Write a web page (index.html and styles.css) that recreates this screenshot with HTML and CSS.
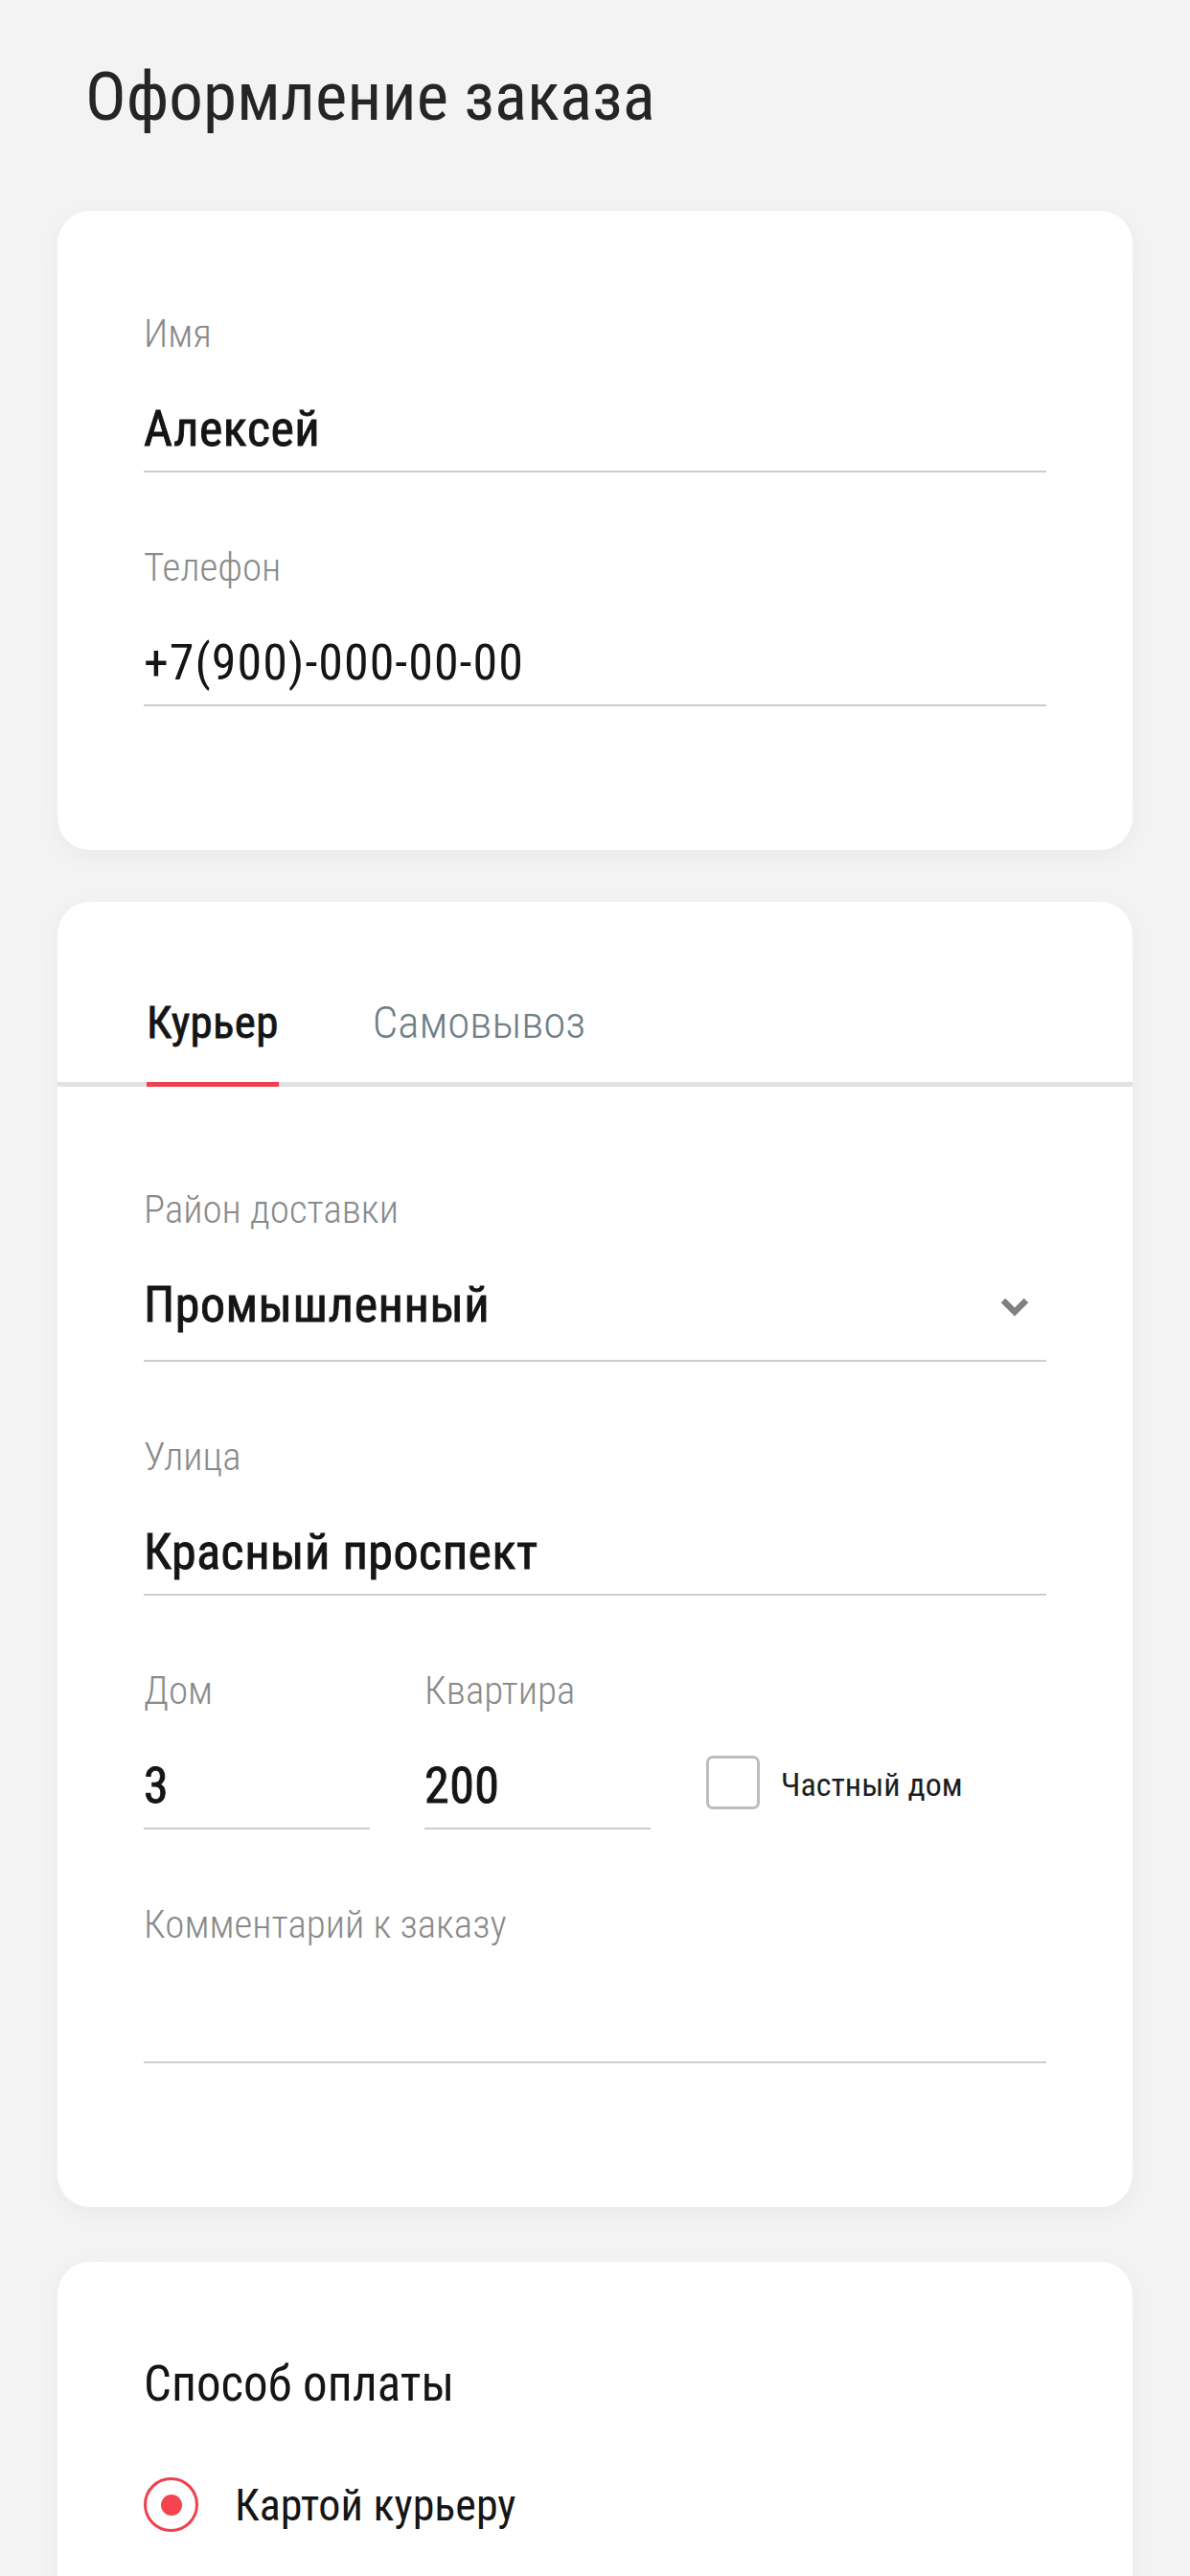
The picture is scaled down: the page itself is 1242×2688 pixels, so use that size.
FILE: index.html
```html
<!DOCTYPE html>
<html lang="ru">
<head>
<meta charset="utf-8">
<title>Оформление заказа</title>
<link rel="stylesheet" href="styles.css">
</head>
<body>
<main class="page">
  <h1 class="page-title">Оформление заказа</h1>

  <section class="card card-contacts">
    <div class="field">
      <div class="field-label">Имя</div>
      <div class="field-value">Алексей</div>
    </div>
    <div class="field">
      <div class="field-label">Телефон</div>
      <div class="field-value field-value-regular">+7(900)-000-00-00</div>
    </div>
  </section>

  <section class="card card-delivery">
    <nav class="tabs">
      <div class="tab tab-active">Курьер</div>
      <div class="tab">Самовывоз</div>
    </nav>
    <div class="card-body">
      <div class="field field-select">
        <div class="field-label">Район доставки</div>
        <div class="field-value select-row">
          <span>Промышленный</span>
          <svg class="chevron" width="32" height="22" viewBox="0 0 32 22" aria-hidden="true">
            <path d="M4 4 L16 16 L28 4" fill="none" stroke="#808080" stroke-width="6.5" stroke-linecap="butt" stroke-linejoin="miter"/>
          </svg>
        </div>
      </div>
      <div class="field">
        <div class="field-label">Улица</div>
        <div class="field-value">Красный проспект</div>
      </div>
      <div class="address-row">
        <div class="field field-short">
          <div class="field-label">Дом</div>
          <div class="field-value">3</div>
        </div>
        <div class="field field-short">
          <div class="field-label">Квартира</div>
          <div class="field-value">200</div>
        </div>
        <label class="checkbox-row">
          <span class="checkbox"></span>
          <span class="checkbox-text">Частный дом</span>
        </label>
      </div>
      <div class="field">
        <div class="field-label">Комментарий к заказу</div>
        <div class="field-value">&nbsp;</div>
      </div>
    </div>
  </section>

  <section class="card card-payment">
    <h2 class="section-title">Способ оплаты</h2>
    <div class="radio-row">
      <span class="radio"><span class="radio-dot"></span></span>
      <span class="radio-text">Картой курьеру</span>
    </div>
  </section>
</main>
</body>
</html>
```

FILE: styles.css
```css
* {
  box-sizing: border-box;
}

html, body {
  margin: 0;
  padding: 0;
}

body {
  background: #f3f3f3;
  font-family: "Roboto Condensed", Roboto, "Noto Sans", sans-serif;
  font-stretch: condensed;
  color: #151515;
}

.page {
  padding: 65px 60px 0;
  display: flex;
  flex-direction: column;
}

.page-title {
  margin: 0 0 84px 29px;
  font-size: 71px;
  line-height: 71px;
  font-weight: 400;
  color: #252525;
}

.card {
  background: #ffffff;
  border-radius: 34px;
  box-shadow: 0 6px 26px rgba(0, 0, 0, 0.045);
  margin-bottom: 54px;
}

.card-contacts {
  padding: 107px 90px 150px;
  display: flex;
  flex-direction: column;
  gap: 78px;
}

.field {
  display: flex;
  flex-direction: column;
  gap: 54px;
  border-bottom: 2px solid #cdcdcd;
  padding-bottom: 18px;
}

.field-label {
  font-size: 41px;
  line-height: 42px;
  font-weight: 300;
  color: #8a8a8a;
}

.field-value {
  font-size: 52px;
  line-height: 50px;
  font-weight: 400;
  letter-spacing: 0.5px;
  -webkit-text-stroke: 0.9px #151515;
  color: #151515;
}

.field-value-regular {
  letter-spacing: 1px;
  -webkit-text-stroke: 0;
}

.field-select {
  padding-bottom: 32px;
}

.select-row {
  display: flex;
  align-items: center;
  justify-content: space-between;
}

.chevron {
  margin-right: 17px;
  margin-top: 4px;
}

.card-delivery {
  padding: 103px 0 150px;
}

.tabs {
  display: flex;
  gap: 98px;
  padding-left: 93px;
  border-bottom: 5px solid #e1e1e1;
}

.tab {
  font-size: 47px;
  line-height: 46px;
  padding-bottom: 39px;
  margin-bottom: -5px;
  border-bottom: 5px solid transparent;
  font-weight: 300;
  color: #6e7f86;
}

.tab-active {
  font-weight: 400;
  letter-spacing: 0.3px;
  -webkit-text-stroke: 0.8px #151515;
  color: #151515;
  border-bottom-color: #f0404d;
}

.card-body {
  padding: 107px 90px 0;
  display: flex;
  flex-direction: column;
  gap: 78px;
}

.address-row {
  display: flex;
  align-items: flex-end;
  gap: 57px;
}

.field-short {
  width: 236px;
}

.checkbox-row {
  display: flex;
  align-items: center;
  gap: 22px;
  margin-left: 1px;
  margin-bottom: 21px;
}

.checkbox {
  width: 56px;
  height: 56px;
  border: 3px solid #bdbdbd;
  border-radius: 7px;
  background: #fff;
}

.checkbox-text {
  font-size: 34px;
  line-height: 35px;
  font-weight: 400;
  color: #1e1e1e;
  margin-top: 4px;
}

.card-payment {
  margin-top: 3px;
  padding: 103px 90px 140px;
  display: flex;
  flex-direction: column;
  gap: 73px;
}

.section-title {
  margin: 0;
  font-size: 51px;
  line-height: 49px;
  font-weight: 400;
  color: #151515;
}

.radio-row {
  display: flex;
  align-items: center;
  gap: 38px;
}

.radio {
  width: 57px;
  height: 57px;
  border: 3.5px solid #f0404d;
  border-radius: 50%;
  display: flex;
  align-items: center;
  justify-content: center;
}

.radio-dot {
  width: 22px;
  height: 22px;
  border-radius: 50%;
  background: #f3444f;
}

.radio-text {
  font-size: 46px;
  line-height: 48px;
  font-weight: 400;
  color: #151515;
}
```
